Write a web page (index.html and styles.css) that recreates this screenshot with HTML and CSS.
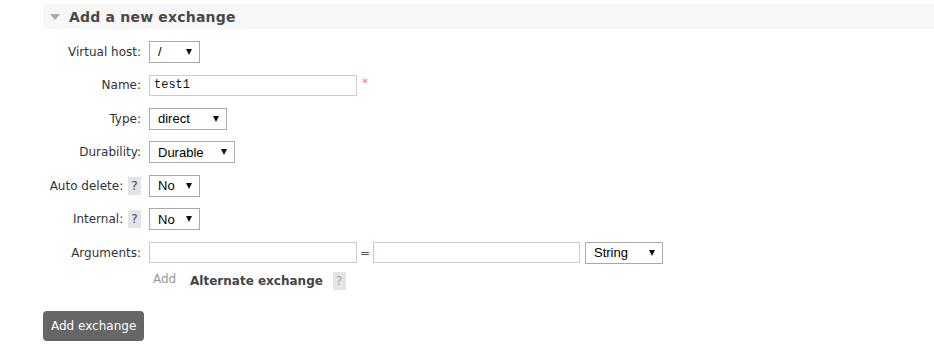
FILE: index.html
```html
<!DOCTYPE html>
<html lang="en">
<head>
    <meta charset="UTF-8">
    <title>Exchanges</title>
    <link rel="stylesheet" href="styles.css">
</head>
<body>
    <div class="section">
        <div class="section-head">
            <span class="toggle"></span>
            <h2>Add a new exchange</h2>
        </div>
        <table class="form">
            <tr>
                <th>Virtual host:</th>
                <td><span class="select w-51"><span>/</span><i class="arrow"></i></span></td>
            </tr>
            <tr>
                <th>Name:</th>
                <td><span class="input w-208 mono">test1</span><span class="mand">*</span></td>
            </tr>
            <tr>
                <th>Type:</th>
                <td><span class="select w-78"><span>direct</span><i class="arrow"></i></span></td>
            </tr>
            <tr>
                <th>Durability:</th>
                <td><span class="select w-86"><span>Durable</span><i class="arrow"></i></span></td>
            </tr>
            <tr>
                <th>Auto delete: <span class="help">?</span></th>
                <td><span class="select w-51"><span>No</span><i class="arrow"></i></span></td>
            </tr>
            <tr>
                <th>Internal: <span class="help">?</span></th>
                <td><span class="select w-51"><span>No</span><i class="arrow"></i></span></td>
            </tr>
            <tr>
                <th>Arguments:</th>
                <td class="args">
                    <span class="input w-208"></span>
                    <span class="eq">=</span>
                    <span class="input w-207"></span>
                    <span class="select w-78"><span>String</span><i class="arrow"></i></span>
                </td>
            </tr>
            <tr class="links-row">
                <th></th>
                <td>
                    <span class="add">Add</span>
                    <span class="alt">Alternate exchange</span>
                    <span class="help light">?</span>
                </td>
            </tr>
        </table>
        <button class="submit">Add exchange</button>
    </div>
</body>
</html>
```

FILE: styles.css
```css
body {
    margin: 0;
    font-family: "DejaVu Sans", Verdana, sans-serif;
    font-size: 12px;
    color: #333;
    background: #fff;
}
.section {
    margin: 4px 0 0 43px;
}
.section-head {
    display: flex;
    align-items: center;
    height: 25px;
    background-color: #f7f7f7;
}
.toggle {
    width: 0;
    height: 0;
    margin: 0 9px 0 7px;
    border-left: 5px solid transparent;
    border-right: 5px solid transparent;
    border-top: 6px solid #aaa;
}
.section-head h2 {
    margin: 0;
    font-size: 14px;
    letter-spacing: 0.2px;
    font-weight: bold;
    color: #484848;
}
.form {
    border-collapse: collapse;
    margin-top: 6px;
}
.form tr {
    height: 33.5px;
}
.form th {
    width: 98px;
    padding: 0 8px 0 0;
    text-align: right;
    font-weight: normal;
    white-space: nowrap;
    vertical-align: middle;
}
.form td {
    padding: 0;
    vertical-align: middle;
}
.form .links-row {
    height: 23px;
}
.select {
    display: inline-flex;
    align-items: center;
    justify-content: space-between;
    box-sizing: border-box;
    height: 22px;
    padding: 0 7px 0 8px;
    border: 1px solid #a9a9a9;
    background: #fff;
    font-family: "Liberation Sans", Arial, sans-serif;
    font-size: 13px;
    color: #000;
    vertical-align: middle;
}
.arrow {
    width: 0;
    height: 0;
    border-left: 3.5px solid transparent;
    border-right: 3.5px solid transparent;
    border-top: 6px solid #111;
}
.input {
    display: inline-block;
    box-sizing: border-box;
    height: 21px;
    padding: 2px 4px;
    border: 1px solid #ccc;
    background: #fff;
    vertical-align: middle;
}
.mono {
    font-family: "Liberation Mono", "Courier New", monospace;
    font-size: 12px;
    line-height: 15px;
    color: #111;
}
.mand {
    margin-left: 5px;
    font-size: 12px;
    color: #f77;
    vertical-align: 2px;
}
.w-51 { width: 51px; }
.w-78 { width: 78px; }
.w-86 { width: 86px; }
.w-207 { width: 207px; }
.w-208 { width: 208px; }
.args {
    display: flex;
    align-items: center;
    height: 33.5px;
}
.eq {
    width: 16px;
    text-align: center;
    color: #555;
}
.args .select {
    margin-left: 5px;
}
.help {
    display: inline-block;
    width: 13px;
    height: 18px;
    line-height: 18px;
    margin-left: 1px;
    text-align: center;
    background-color: #e4e4e4;
    color: #445;
    vertical-align: middle;
}
.help.light {
    color: #aaa;
    margin-left: 6px;
}
.add {
    margin-left: 4px;
    color: #999;
    vertical-align: 2px;
}
.alt {
    margin-left: 10px;
    font-weight: bold;
    color: #444;
    vertical-align: middle;
}
.submit {
    display: block;
    margin-top: 18px;
    height: 30px;
    padding: 0 8px;
    border: none;
    border-radius: 4px;
    background-color: #666;
    color: #fff;
    font-family: "DejaVu Sans", Verdana, sans-serif;
    font-size: 12px;
    cursor: pointer;
}
```
